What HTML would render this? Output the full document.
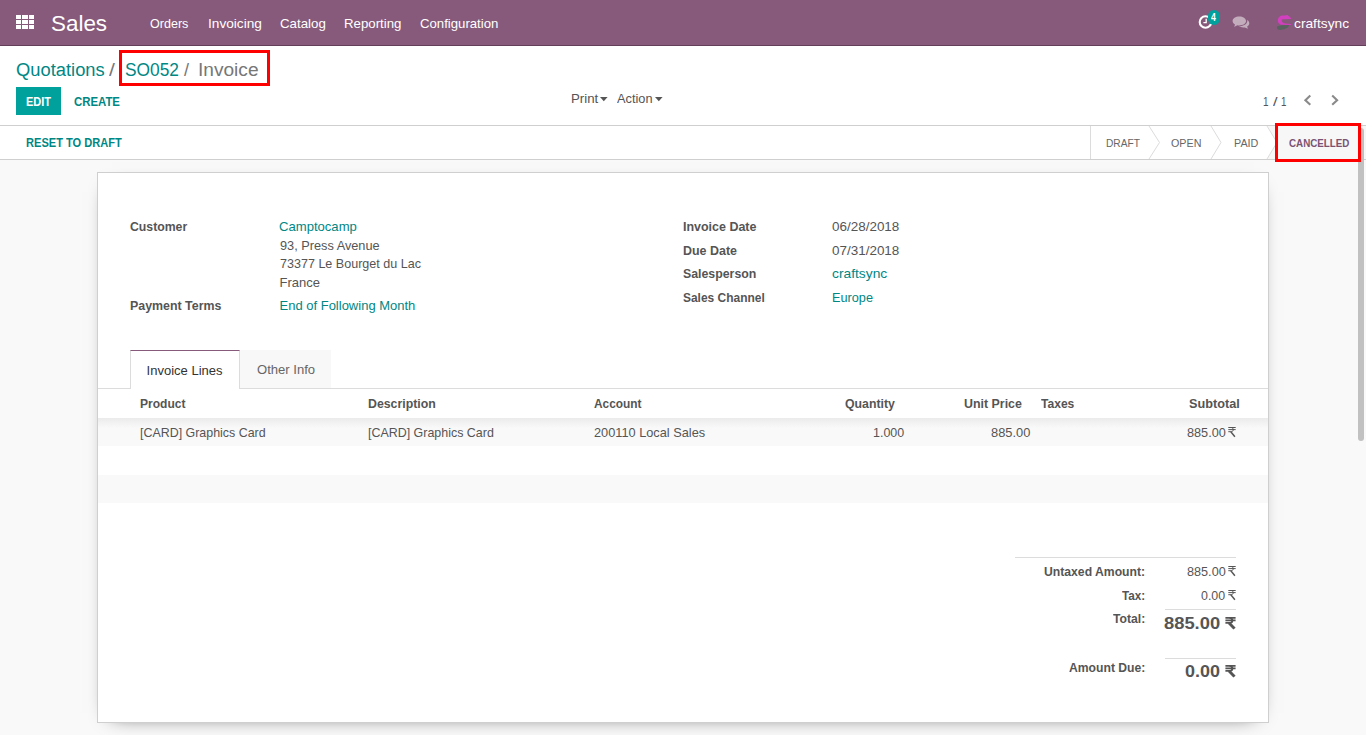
<!DOCTYPE html>
<html><head><meta charset="utf-8">
<style>
*{box-sizing:border-box;margin:0;padding:0}
html,body{width:1366px;height:735px;overflow:hidden;background:#f9f9f9;font-family:"Liberation Sans",sans-serif;font-size:13px;color:#4c4c4c}
.b{position:absolute}
.t{position:absolute;white-space:nowrap;line-height:1;transform-origin:0 0}
svg{position:absolute;overflow:visible}
</style></head><body>
<!-- navbar -->
<div class="b" style="left:0;top:0;width:1366px;height:46px;background:#875a7b;border-bottom:1px solid #633f5a"></div>
<svg style="left:16px;top:15px" width="18" height="14" viewBox="0 0 18 14" fill="#fff" shape-rendering="crispEdges">
<rect x="0" y="0" width="5" height="4"/><rect x="6" y="0" width="6" height="4"/><rect x="12.5" y="0" width="5.5" height="4"/>
<rect x="0" y="5" width="5" height="4"/><rect x="6" y="5" width="6" height="4"/><rect x="12.5" y="5" width="5.5" height="4"/>
<rect x="0" y="10" width="5" height="4"/><rect x="6" y="10" width="6" height="4"/><rect x="12.5" y="10" width="5.5" height="4"/>
</svg>
<!-- clock -->
<svg style="left:1198px;top:14px" width="15" height="16" viewBox="0 0 15 16">
<circle cx="7.5" cy="8" r="5.8" fill="none" stroke="#fff" stroke-width="2.1"/>
<path d="M8.2 4.8 V8.6 H5.4" fill="none" stroke="#fff" stroke-width="1.3"/>
</svg>
<div class="b" style="left:1208px;top:10px;width:12.3px;height:15px;border-radius:6.2px;background:#00a09d"></div>
<!-- chat -->
<svg style="left:1232px;top:16px" width="18" height="14" viewBox="0 0 18 14" fill="#c3adbd">
<path d="M7.2 0.6 C11 0.6 14 2.5 14 5 C14 7.5 11 9.4 7.2 9.4 C6.5 9.4 5.9 9.3 5.3 9.2 L2.2 11 L3 8.4 C1.5 7.6 0.6 6.4 0.6 5 C0.6 2.5 3.5 0.6 7.2 0.6 Z"/>
<path d="M15 3.8 C16.4 4.6 17.3 5.8 17.3 7.2 C17.3 8.5 16.5 9.7 15.1 10.5 L15.9 12.8 L12.8 11.4 C12.3 11.5 11.8 11.5 11.2 11.5 C9.5 11.5 8 11 7 10.3 C11.8 10.2 15.3 7.9 15.3 5 C15.3 4.6 15.2 4.2 15 3.8 Z"/>
</svg>
<!-- avatar -->
<svg style="left:1276px;top:14px" width="16" height="17" viewBox="0 0 16 17">
<path d="M14.9 4.1 L11.5 0.9 C9.5 1.4 7.5 1.3 5.4 1.6 C3 2.2 1.8 4.5 1.8 6.8 C1.9 8.6 2.8 9.8 4.2 10.4 C5 10.8 6 10.8 7 10.8 L14.9 10.9 L14.9 10 L9.2 9.6 C7.8 9.4 6.8 8.7 6.1 7.8 C5.6 7.1 5.5 6.3 5.9 5.8 C6.3 5.4 7 5.3 8 5.3 L14.9 5 Z" fill="#d23fbf"/>
<path d="M1 12.6 C2.5 11.8 4 11.3 5.6 11.2 L13 11.1 C12.8 12.4 12.2 13.4 11 14.1 C9.5 15 7 15.6 4.8 15.9 C3.5 16 2.4 15.8 1.6 15.2 C1 14.6 0.8 13.6 1 12.6 Z" fill="#5a625f"/>
</svg>
<!-- control panel -->
<div class="b" style="left:0;top:46px;width:1366px;height:80px;background:#fff;border-bottom:1px solid #cfcfcf"></div>
<div class="b" style="left:16px;top:87px;width:45px;height:28px;background:#00a09d"></div>
<svg style="left:600.3px;top:97px" width="8" height="5" viewBox="0 0 8 5"><path d="M0 0 H7.6 L3.8 4.2 Z" fill="#555"/></svg>
<svg style="left:655.3px;top:97px" width="8" height="5" viewBox="0 0 8 5"><path d="M0 0 H7.6 L3.8 4.2 Z" fill="#555"/></svg>
<svg style="left:1300px;top:92px" width="45" height="16" viewBox="0 0 45 16">
<path d="M10.3 3.6 L5.4 8.2 L10.3 12.8" fill="none" stroke="#8a8a8a" stroke-width="2.1"/>
<path d="M32.2 3.6 L37.1 8.2 L32.2 12.8" fill="none" stroke="#8a8a8a" stroke-width="2.1"/>
</svg>
<!-- statusbar -->
<div class="b" style="left:0;top:126px;width:1366px;height:34px;background:#fff;border-bottom:1px solid #cfcfcf"></div>
<div class="b" style="left:1267px;top:126px;width:99px;height:33px;background:#f7f7f7"></div>
<svg style="left:1089px;top:126px" width="200" height="33" viewBox="0 0 200 33">
<path d="M0 0 H60 L70.5 16.5 L60 33 H0 Z" fill="#fff"/>
<path d="M60 0 H122 L132 16.5 L122 33 H60 L70.5 16.5 Z" fill="#fff"/>
<path d="M122 0 H178 L188 16.5 L178 33 H122 L132 16.5 Z" fill="#fff"/>
<path d="M1.5 0 V33" stroke="#dcdcdc" stroke-width="1"/>
<path d="M60 0 L70.5 16.5 L60 33 M122 0 L132 16.5 L122 33 M178 0 L188 16.5 L178 33" fill="none" stroke="#dcdcdc" stroke-width="1"/>
</svg>
<!-- sheet -->
<div class="b" style="left:97px;top:172px;width:1172px;height:551px;background:#fff;border:1px solid #cfcfcf;box-shadow:0 5px 20px -15px #000"></div>
<!-- tabs -->
<div class="b" style="left:98px;top:388px;width:1170px;height:1px;background:#dcdcdc"></div>
<div class="b" style="left:240px;top:350px;width:91px;height:38px;background:#f8f8f8"></div>
<div class="b" style="left:130px;top:350px;width:110px;height:39px;background:#fff;border:1px solid #dcdcdc;border-top:1px solid #875a7b;border-bottom:none"></div>
<!-- table -->
<div class="b" style="left:98px;top:418px;width:1170px;height:28px;background:#f9f9f9"></div>
<div class="b" style="left:98px;top:418px;width:1170px;height:10px;background:linear-gradient(#ebebeb,rgba(249,249,249,0))"></div>
<div class="b" style="left:98px;top:475px;width:1170px;height:28px;background:#f9f9f9"></div>
<!-- totals -->
<div class="b" style="left:1015px;top:557px;width:221px;height:1px;background:#dcdcdc"></div>
<div class="b" style="left:1165px;top:609px;width:71px;height:1px;background:#dcdcdc"></div>
<div class="b" style="left:1165px;top:658px;width:71px;height:1px;background:#dcdcdc"></div>
<!-- rupee glyphs -->
<svg style="left:1228px;top:427px" width="8" height="10" viewBox="0 0 8 10"><g fill="none" stroke="#555" stroke-width="1">
<path d="M0.3 0.5 H7.7 M0.3 2.6 H7.7"/>
<path d="M3.3 0.5 C5.8 0.7 6 4.6 3.3 4.7 H0.3"/>
<path d="M2.8 4.7 L6.9 9.8" stroke-width="1.4"/>
</g></svg>
<svg style="left:1228px;top:566px" width="8" height="10" viewBox="0 0 8 10"><g fill="none" stroke="#555" stroke-width="1">
<path d="M0.3 0.5 H7.7 M0.3 2.6 H7.7"/>
<path d="M3.3 0.5 C5.8 0.7 6 4.6 3.3 4.7 H0.3"/>
<path d="M2.8 4.7 L6.9 9.8" stroke-width="1.4"/>
</g></svg>
<svg style="left:1228px;top:590px" width="8" height="10" viewBox="0 0 8 10"><g fill="none" stroke="#555" stroke-width="1">
<path d="M0.3 0.5 H7.7 M0.3 2.6 H7.7"/>
<path d="M3.3 0.5 C5.8 0.7 6 4.6 3.3 4.7 H0.3"/>
<path d="M2.8 4.7 L6.9 9.8" stroke-width="1.4"/>
</g></svg>
<svg style="left:1224.5px;top:617px" width="11" height="12" viewBox="0 0 8 10" preserveAspectRatio="none"><g fill="none" stroke="#555" stroke-width="1.35">
<path d="M0.3 0.7 H7.7 M0.3 2.8 H7.7"/>
<path d="M3.3 0.7 C5.9 0.9 6.1 4.8 3.3 4.9 H0.3"/>
<path d="M2.9 4.9 L6.9 9.6" stroke-width="2.2"/>
</g></svg>
<svg style="left:1224.5px;top:665px" width="11" height="12" viewBox="0 0 8 10" preserveAspectRatio="none"><g fill="none" stroke="#555" stroke-width="1.35">
<path d="M0.3 0.7 H7.7 M0.3 2.8 H7.7"/>
<path d="M3.3 0.7 C5.9 0.9 6.1 4.8 3.3 4.9 H0.3"/>
<path d="M2.9 4.9 L6.9 9.6" stroke-width="2.2"/>
</g></svg>

<!-- scrollbar -->
<div class="b" style="left:1358px;top:128px;width:6px;height:313px;border-radius:3px;background:#c1c1c1"></div>
<!-- red boxes -->
<div class="b" style="left:119px;top:50px;width:151px;height:36px;border:3px solid #f00"></div>
<div class="b" style="left:1275px;top:123px;width:86px;height:39px;border:3px solid #f00"></div>
<div class="t" style="left:50.98px;top:13px;font-size:22px;font-weight:normal;color:#fff;transform:scaleX(1.0189);">Sales</div>
<div class="t" style="left:150.43px;top:17px;font-size:13px;font-weight:normal;color:#fff;transform:scaleX(0.9658);">Orders</div>
<div class="t" style="left:208.45px;top:17px;font-size:13px;font-weight:normal;color:#fff;transform:scaleX(1.0510);">Invoicing</div>
<div class="t" style="left:279.98px;top:17px;font-size:13px;font-weight:normal;color:#fff;transform:scaleX(1.0233);">Catalog</div>
<div class="t" style="left:343.98px;top:17px;font-size:13px;font-weight:normal;color:#fff;transform:scaleX(1.0182);">Reporting</div>
<div class="t" style="left:419.99px;top:17px;font-size:13px;font-weight:normal;color:#fff;transform:scaleX(1.0133);">Configuration</div>
<div class="t" style="left:1294.44px;top:17px;font-size:13px;font-weight:normal;color:#fff;transform:scaleX(1.0588);">craftsync</div>
<div class="t" style="left:15.88px;top:61px;font-size:18px;font-weight:normal;color:#008784;transform:scaleX(1.0188);">Quotations</div>
<div class="t" style="left:108.80px;top:61px;font-size:18px;font-weight:normal;color:#777;transform:scaleX(1.1800);">/</div>
<div class="t" style="left:124.64px;top:61px;font-size:18px;font-weight:normal;color:#008784;transform:scaleX(0.9630);">SO052</div>
<div class="t" style="left:184.00px;top:61px;font-size:18px;font-weight:normal;color:#777;">/</div>
<div class="t" style="left:197.58px;top:61px;font-size:18px;font-weight:normal;color:#777;transform:scaleX(1.0611);">Invoice</div>
<div class="t" style="left:25.78px;top:96px;font-size:12px;font-weight:bold;color:#fff;transform:scaleX(0.9154);">EDIT</div>
<div class="t" style="left:74.35px;top:96px;font-size:12px;font-weight:bold;color:#008784;transform:scaleX(0.9489);">CREATE</div>
<div class="t" style="left:570.58px;top:92px;font-size:13px;font-weight:normal;color:#555555;transform:scaleX(1.0200);">Print</div>
<div class="t" style="left:617.00px;top:92px;font-size:13px;font-weight:normal;color:#555555;transform:scaleX(0.9829);">Action</div>
<div class="t" style="left:1263.13px;top:95px;font-size:13px;font-weight:normal;color:#555555;transform:scaleX(0.7667);">1</div>
<div class="t" style="left:1273.00px;top:95px;font-size:13px;font-weight:normal;color:#555555;transform:scaleX(1.2500);">/</div>
<div class="t" style="left:1280.75px;top:95px;font-size:13px;font-weight:normal;color:#555555;transform:scaleX(0.7500);">1</div>
<div class="t" style="left:25.88px;top:137px;font-size:12px;font-weight:bold;color:#008784;transform:scaleX(0.9233);">RESET TO DRAFT</div>
<div class="t" style="left:1105.58px;top:138px;font-size:11px;font-weight:normal;color:#666;transform:scaleX(0.9229);">DRAFT</div>
<div class="t" style="left:1171.02px;top:138px;font-size:11px;font-weight:normal;color:#666;transform:scaleX(0.9759);">OPEN</div>
<div class="t" style="left:1233.52px;top:138px;font-size:11px;font-weight:normal;color:#666;transform:scaleX(0.9783);">PAID</div>
<div class="t" style="left:1289.31px;top:138px;font-size:11px;font-weight:bold;color:#7a5274;transform:scaleX(0.8910);">CANCELLED</div>
<div class="t" style="left:129.76px;top:220px;font-size:13px;font-weight:bold;color:#555555;transform:scaleX(0.9424);">Customer</div>
<div class="t" style="left:279.49px;top:220px;font-size:13px;font-weight:normal;color:#008784;transform:scaleX(1.0066);">Camptocamp</div>
<div class="t" style="left:279.52px;top:239px;font-size:13px;font-weight:normal;color:#555555;transform:scaleX(0.9800);">93, Press Avenue</div>
<div class="t" style="left:279.53px;top:257px;font-size:13px;font-weight:normal;color:#555555;transform:scaleX(0.9655);">73377 Le Bourget du Lac</div>
<div class="t" style="left:279.50px;top:276px;font-size:13px;font-weight:normal;color:#555555;">France</div>
<div class="t" style="left:129.75px;top:299px;font-size:13px;font-weight:bold;color:#555555;transform:scaleX(0.9532);">Payment Terms</div>
<div class="t" style="left:279.50px;top:299px;font-size:13px;font-weight:normal;color:#008784;">End of Following Month</div>
<div class="t" style="left:682.94px;top:220px;font-size:13px;font-weight:bold;color:#555555;transform:scaleX(0.9587);">Invoice Date</div>
<div class="t" style="left:682.94px;top:244px;font-size:13px;font-weight:bold;color:#555555;transform:scaleX(0.9582);">Due Date</div>
<div class="t" style="left:682.95px;top:267px;font-size:13px;font-weight:bold;color:#555555;transform:scaleX(0.9480);">Salesperson</div>
<div class="t" style="left:682.98px;top:291px;font-size:13px;font-weight:bold;color:#555555;transform:scaleX(0.9195);">Sales Channel</div>
<div class="t" style="left:832.37px;top:220px;font-size:13px;font-weight:normal;color:#555555;transform:scaleX(1.0349);">06/28/2018</div>
<div class="t" style="left:832.37px;top:244px;font-size:13px;font-weight:normal;color:#555555;transform:scaleX(1.0349);">07/31/2018</div>
<div class="t" style="left:832.34px;top:267px;font-size:13px;font-weight:normal;color:#008784;transform:scaleX(1.0627);">craftsync</div>
<div class="t" style="left:832.42px;top:291px;font-size:13px;font-weight:normal;color:#008784;transform:scaleX(0.9775);">Europe</div>
<div class="t" style="left:146.60px;top:364px;font-size:13px;font-weight:normal;color:#333;">Invoice Lines</div>
<div class="t" style="left:257.29px;top:363px;font-size:13px;font-weight:normal;color:#666;transform:scaleX(1.0054);">Other Info</div>
<div class="t" style="left:139.57px;top:397px;font-size:13px;font-weight:bold;color:#555555;transform:scaleX(0.9250);">Product</div>
<div class="t" style="left:367.75px;top:397px;font-size:13px;font-weight:bold;color:#555555;transform:scaleX(0.9486);">Description</div>
<div class="t" style="left:594.49px;top:397px;font-size:13px;font-weight:bold;color:#555555;transform:scaleX(0.9137);">Account</div>
<div class="t" style="left:845.15px;top:397px;font-size:13px;font-weight:bold;color:#555555;transform:scaleX(0.9462);">Quantity</div>
<div class="t" style="left:964.25px;top:397px;font-size:13px;font-weight:bold;color:#555555;transform:scaleX(0.9542);">Unit Price</div>
<div class="t" style="left:1040.50px;top:397px;font-size:13px;font-weight:bold;color:#555555;transform:scaleX(0.9286);">Taxes</div>
<div class="t" style="left:1189.32px;top:397px;font-size:13px;font-weight:bold;color:#555555;transform:scaleX(0.9760);">Subtotal</div>
<div class="t" style="left:139.54px;top:426px;font-size:13px;font-weight:normal;color:#555555;transform:scaleX(0.9554);">[CARD] Graphics Card</div>
<div class="t" style="left:367.74px;top:426px;font-size:13px;font-weight:normal;color:#555555;transform:scaleX(0.9569);">[CARD] Graphics Card</div>
<div class="t" style="left:594.42px;top:426px;font-size:13px;font-weight:normal;color:#555555;transform:scaleX(0.9812);">200110 Local Sales</div>
<div class="t" style="left:873.04px;top:426px;font-size:13px;font-weight:normal;color:#555555;transform:scaleX(0.9581);">1.000</div>
<div class="t" style="left:991.31px;top:426px;font-size:13px;font-weight:normal;color:#555555;transform:scaleX(0.9895);">885.00</div>
<div class="t" style="left:1186.62px;top:426px;font-size:13px;font-weight:normal;color:#555555;transform:scaleX(0.9763);">885.00</div>
<div class="t" style="left:1043.96px;top:565px;font-size:13px;font-weight:bold;color:#555555;transform:scaleX(0.9377);">Untaxed Amount:</div>
<div class="t" style="left:1186.73px;top:565px;font-size:13px;font-weight:normal;color:#555555;transform:scaleX(0.9737);">885.00</div>
<div class="t" style="left:1121.80px;top:589px;font-size:13px;font-weight:bold;color:#555555;transform:scaleX(0.9000);">Tax:</div>
<div class="t" style="left:1200.85px;top:589px;font-size:13px;font-weight:normal;color:#555555;transform:scaleX(0.9542);">0.00</div>
<div class="t" style="left:1113.40px;top:612px;font-size:13px;font-weight:bold;color:#555555;transform:scaleX(0.9364);">Total:</div>
<div class="t" style="left:1164.45px;top:616px;font-size:16px;font-weight:bold;color:#555555;transform:scaleX(1.1468);">885.00</div>
<div class="t" style="left:1069.46px;top:661px;font-size:13px;font-weight:bold;color:#555555;transform:scaleX(0.9354);">Amount Due:</div>
<div class="t" style="left:1184.68px;top:664px;font-size:16px;font-weight:bold;color:#555555;transform:scaleX(1.1233);">0.00</div>
<div class="t" style="left:1211.20px;top:13px;font-size:10px;font-weight:bold;color:#fff;transform:scaleX(0.8667);">4</div>
</body></html>
